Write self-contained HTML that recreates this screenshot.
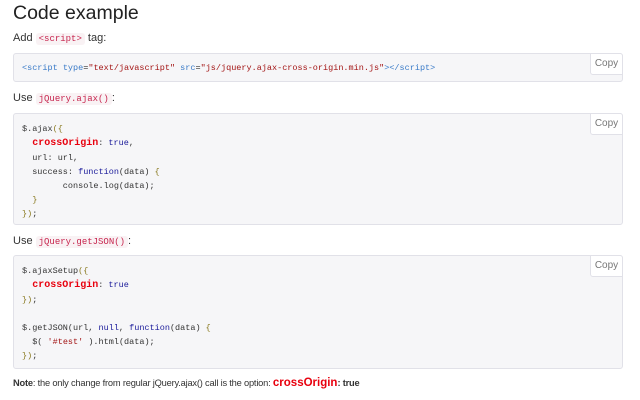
<!DOCTYPE html>
<html><head><meta charset="utf-8"><style>
*{margin:0;padding:0;box-sizing:border-box}
body{width:640px;height:400px;background:#fff;font-family:"Liberation Sans",Arial,sans-serif;color:#333;font-size:11px;position:relative;overflow:hidden}
h1{position:absolute;left:13px;top:2px;font-size:19.5px;font-weight:normal;color:#222}
.p{position:absolute;left:13px;font-size:11px;color:#333}
code.i{font-family:"Liberation Mono",monospace;font-size:9px;color:#c7254e;background:#f9f2f4;padding:1px 3px;border-radius:3px}
.pre{position:absolute;left:13px;width:610px;background:#f6f6f8;border:1px solid #e1e1e8;border-radius:3px;font-family:"Liberation Mono",monospace;font-size:8.5px;line-height:14px;color:#333;padding:0 0 0 8px;white-space:pre}
.copy{position:absolute;right:-1px;top:-1px;width:33px;height:22px;background:#fff;border:1px solid #e1e1e8;border-radius:0 3px 0 3px;font-family:"Liberation Sans",Arial,sans-serif;font-size:10px;color:#777;text-align:center;line-height:20px}
.k{color:#e8000e;font-size:10px;font-weight:bold}
.b{color:#1a1a9a}
.s{color:#a31515}
.a{color:#3a7bc8}
.g{color:#8a7a20}
</style></head><body>
<h1>Code example</h1>
<div class="p" style="top:32px">Add <code class="i">&lt;script&gt;</code> tag:</div>
<div class="pre" style="top:53px;height:29px;padding-top:7px"><span class="a">&lt;script</span> <span class="a">type</span>=<span class="s">"text/javascript"</span> <span class="a">src</span>=<span class="s">"js/jquery.ajax-cross-origin.min.js"</span><span class="a">&gt;&lt;/script&gt;</span><div class="copy">Copy</div></div>
<div class="p" style="top:92px">Use <code class="i">jQuery.ajax()</code>:</div>
<div class="pre" style="top:113px;height:112px;padding-top:8px">$.ajax<span class="g">({</span>
  <span class="k">crossOrigin</span>: <span class="b">true</span>,
  url: url,
  success: <span class="b">function</span>(data) <span class="g">{</span>
        console.log(data);
  <span class="g">}</span>
<span class="g">})</span>;<div class="copy">Copy</div></div>
<div class="p" style="top:235px">Use <code class="i">jQuery.getJSON()</code>:</div>
<div class="pre" style="top:255px;height:114px;padding-top:8px">$.ajaxSetup<span class="g">({</span>
  <span class="k">crossOrigin</span>: <span class="b">true</span>
<span class="g">})</span>;

$.getJSON(url, <span class="b">null</span>, <span class="b">function</span>(data) <span class="g">{</span>
  $( <span class="s">'#test'</span> ).html(data);
<span class="g">})</span>;<div class="copy">Copy</div></div>
<div class="p" style="top:377px;font-size:9.3px;letter-spacing:-0.2px"><b>Note</b>: the only change from regular jQuery.ajax() call is the option: <b style="color:#e8000e;font-size:11.5px;letter-spacing:0">crossOrigin</b><b>: true</b></div>
</body></html>
